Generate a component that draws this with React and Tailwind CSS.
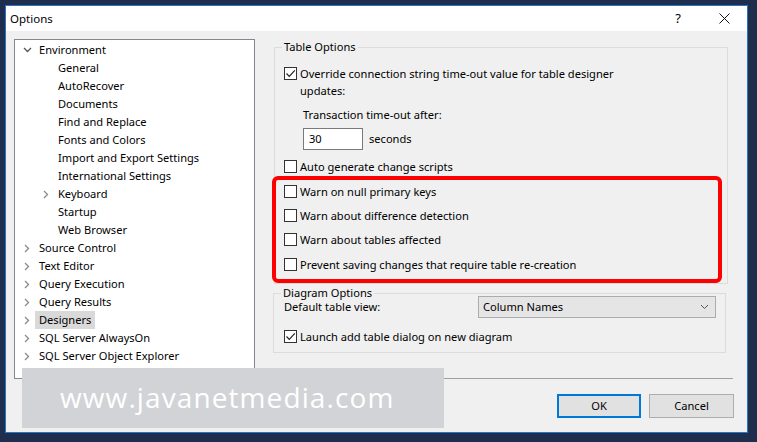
import React from "react";

const treeItems = [
  { label: "Environment", level: 0, chevron: "down" },
  { label: "General", level: 1 },
  { label: "AutoRecover", level: 1 },
  { label: "Documents", level: 1 },
  { label: "Find and Replace", level: 1 },
  { label: "Fonts and Colors", level: 1 },
  { label: "Import and Export Settings", level: 1 },
  { label: "International Settings", level: 1 },
  { label: "Keyboard", level: 1, chevron: "right" },
  { label: "Startup", level: 1 },
  { label: "Web Browser", level: 1 },
  { label: "Source Control", level: 0, chevron: "right" },
  { label: "Text Editor", level: 0, chevron: "right" },
  { label: "Query Execution", level: 0, chevron: "right" },
  { label: "Query Results", level: 0, chevron: "right" },
  { label: "Designers", level: 0, chevron: "right", selected: true },
  { label: "SQL Server AlwaysOn", level: 0, chevron: "right" },
  { label: "SQL Server Object Explorer", level: 0, chevron: "right" },
];

function Chevron({ dir }) {
  if (dir === "down") {
    return (
      <svg width="9" height="6" viewBox="0 0 9 6" className="text-[#555]">
        <path d="M1 1 L4.5 4.5 L8 1" fill="none" stroke="currentColor" strokeWidth="1.3" />
      </svg>
    );
  }
  return (
    <svg width="6" height="9" viewBox="0 0 6 9" className="text-[#8a8a8a]">
      <path d="M1 1 L4.5 4.5 L1 8" fill="none" stroke="currentColor" strokeWidth="1.3" />
    </svg>
  );
}

function Checkbox({ checked }) {
  return (
    <span className="flex h-[13px] w-[13px] shrink-0 items-center justify-center border border-[#333] bg-white">
      {checked && (
        <svg width="11" height="11" viewBox="0 0 11 11">
          <path d="M1.5 5.5 L4.3 8.3 L9.8 2.3" fill="none" stroke="#222" strokeWidth="1.2" />
        </svg>
      )}
    </span>
  );
}

function CheckRow({ checked, label, className }) {
  return (
    <div className={"flex items-center gap-[3px] leading-[17px] " + (className || "")}>
      <Checkbox checked={checked} />
      <span>{label}</span>
    </div>
  );
}

export default function App() {
  return (
    <div className="relative h-[442px] w-[757px] overflow-hidden bg-[#1f2e4c] pb-[9px] pl-[5px] pr-[9px] pt-[5px] font-['Noto_Sans',sans-serif] text-[11.1px] text-black">
      <div className="flex h-full flex-col border border-[#2a74c8] bg-[#f0f0f0]">
        {/* title bar */}
        <div className="flex h-[25px] items-center justify-between bg-white pl-[4px] text-[11.5px]">
          <span>Options</span>
          <div className="flex items-center">
            <span className="w-[46px] text-center text-[13px]">?</span>
            <span className="flex w-[46px] justify-center">
              <svg width="11" height="11" viewBox="0 0 11 11">
                <path d="M0.5 0.5 L10.5 10.5 M10.5 0.5 L0.5 10.5" stroke="#111" strokeWidth="1" />
              </svg>
            </span>
          </div>
        </div>

        <div className="flex pl-[8px] pr-[14px] pt-[8px]">
          {/* tree */}
          <div className="h-[340px] w-[241px] shrink-0 border border-[#828790] bg-white pt-[1px]">
            {treeItems.map((item) => (
              <div
                key={item.label}
                className="flex h-[18px] items-center"
                style={{ paddingLeft: 4 + item.level * 19 }}
              >
                <span className="flex w-[16px] items-center justify-center">
                  {item.chevron && <Chevron dir={item.chevron} />}
                </span>
                <span
                  className={
                    "px-[4px] leading-[18px] whitespace-nowrap " +
                    (item.selected ? "bg-[#d9d9d9]" : "")
                  }
                >
                  {item.label}
                </span>
              </div>
            ))}
          </div>

          {/* right side */}
          <div className="ml-[7px] flex h-[340px] flex-1 flex-col border-b border-[#a0a0a0]">
            <fieldset className="ml-[12px] mr-[5px] border border-[#dcdcdc] pb-[10px]">
              <legend className="ml-[7px] px-[2px] leading-[16px]">Table Options</legend>
              <div className="ml-[9px] mt-[10px] flex items-start gap-[3px] leading-[17px]">
                <span className="mt-[2px]">
                  <Checkbox checked />
                </span>
                <span>
                  Override connection string time-out value for table designer
                  <br />
                  updates:
                </span>
              </div>
              <div className="ml-[28px] mt-[7px] leading-[17px]">Transaction time-out after:</div>
              <div className="ml-[28px] mt-[5px] flex items-center gap-[6px]">
                <div className="flex h-[22px] w-[60px] items-center border border-[#7a7a7a] bg-white pl-[5px]">
                  30
                </div>
                <span>seconds</span>
              </div>
              <CheckRow className="ml-[9px] mt-[8px]" label="Auto generate change scripts" />
              <CheckRow className="ml-[9px] mt-[8px]" label="Warn on null primary keys" />
              <CheckRow className="ml-[9px] mt-[7px]" label="Warn about difference detection" />
              <CheckRow className="ml-[9px] mt-[7px]" label="Warn about tables affected" />
              <CheckRow
                className="ml-[9px] mt-[8px]"
                label="Prevent saving changes that require table re-creation"
              />
            </fieldset>

            <fieldset className="ml-[11px] mr-[7px] mt-[3px] border border-[#dcdcdc] pb-[7px]">
              <legend className="ml-[7px] px-[2px] leading-[12px]">Diagram Options</legend>
              <div className="-mt-[3px] ml-[10px] mr-[9px] flex items-center justify-between">
                <span className="leading-[14px]">Default table view:</span>
                <div className="flex h-[22px] w-[238px] items-center justify-between border border-[#acacac] bg-[#e5e5e5] pl-[4px] pr-[6px]">
                  <span>Column Names</span>
                  <svg width="9" height="6" viewBox="0 0 9 6">
                    <path d="M1 1 L4.5 4.5 L8 1" fill="none" stroke="#555" strokeWidth="1" />
                  </svg>
                </div>
              </div>
              <CheckRow className="ml-[10px] mt-[10px]" checked label="Launch add table dialog on new diagram" />
            </fieldset>
          </div>
        </div>

        {/* buttons */}
        <div className="flex justify-end gap-[8px] pr-[13px] pt-[15px]">
          <button className="h-[24px] w-[84px] border-2 border-[#0078d7] bg-[#e1e1e1]">OK</button>
          <button className="h-[24px] w-[85px] border border-[#adadad] bg-[#e1e1e1]">Cancel</button>
        </div>
      </div>

      {/* red annotation */}
      <div className="absolute left-[272px] top-[176px] h-[107px] w-[450px] rounded-[6px] border-4 border-[#ff0000]" />

      {/* watermark */}
      <div className="absolute left-[22px] top-[368px] flex h-[60px] w-[422px] items-center bg-[#d2d3d7] pb-[2px] pl-[38px] font-['Open_Sans',sans-serif] text-[28px] tracking-[1.1px] text-white">
        www.javanetmedia.com
      </div>
    </div>
  );
}
